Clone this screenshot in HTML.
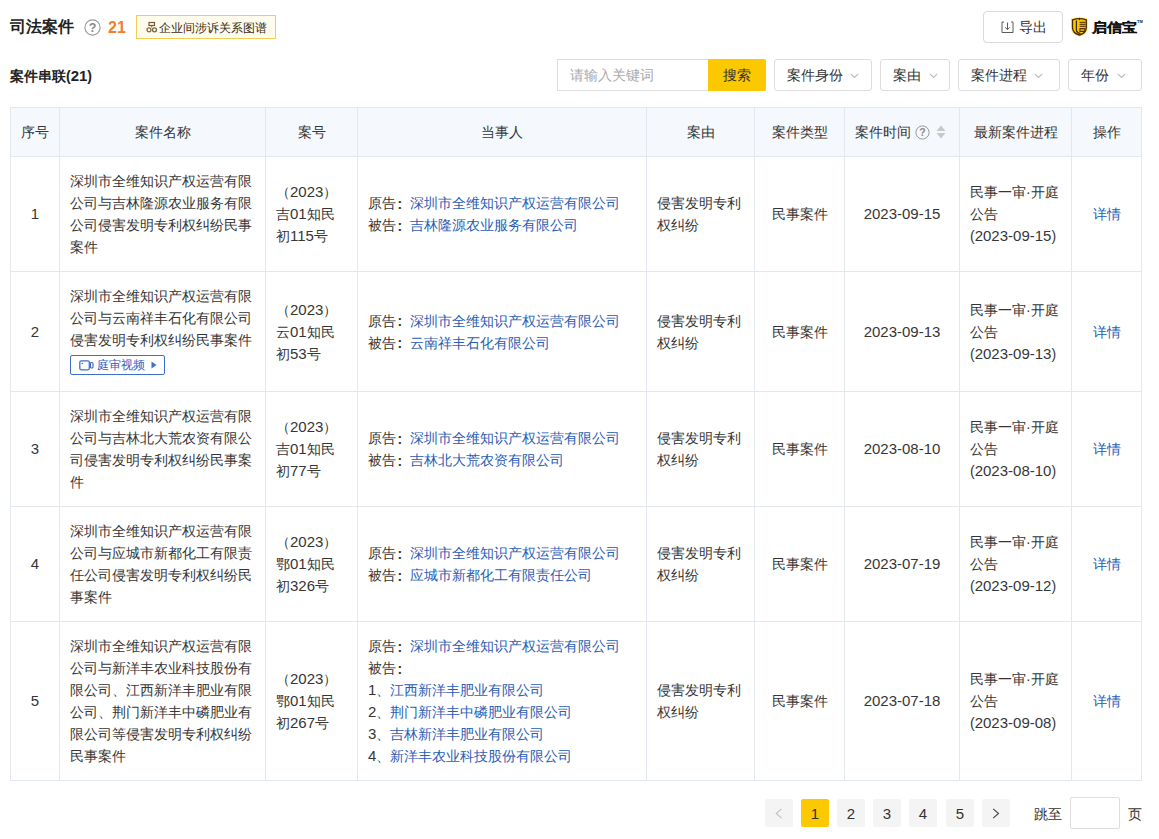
<!DOCTYPE html>
<html><head><meta charset="utf-8">
<style>
*{box-sizing:border-box;margin:0;padding:0}
html,body{width:1159px;height:839px;overflow:hidden;background:#fff}
body{font-family:"Liberation Sans",sans-serif;color:#333;font-size:14px;position:relative}
.abs{position:absolute}
.title{left:10px;top:17px;font-size:16px;font-weight:bold;color:#222;line-height:20px}
.qm{left:84px;top:19px;width:16px;height:16px;border:1px solid #999;border-radius:50%;color:#999;font-size:11px;line-height:14px;text-align:center;font-weight:bold}
.cnt{left:108px;top:18px;font-size:16px;font-weight:bold;color:#f27c2f;line-height:20px}
.badge{left:136px;top:15px;width:140px;height:24px;border:1px solid #efcf52;background:#fffcee;color:#3a2c10;font-size:12px;line-height:22px;padding-left:9px;white-space:nowrap}
.export{left:983px;top:11px;width:80px;height:32px;border:1px solid #d9d9d9;border-radius:4px;font-size:14px;line-height:30px;color:#333}
.sub{left:10px;top:66px;font-size:14px;font-weight:bold;color:#222;line-height:20px}
.inp{left:557px;top:59px;width:152px;height:32px;border:1px solid #ddd;border-right:none;color:#aaa;line-height:30px;padding-left:12px}
.sbtn{left:708px;top:59px;width:58px;height:32px;background:#fcc800;color:#333;line-height:32px;text-align:center;border-radius:0 2px 2px 0}
.dd{top:59px;height:32px;border:1px solid #ddd;border-radius:3px;line-height:30px;padding-left:12px;color:#333}
.dd svg{position:absolute;top:12px}
table{position:absolute;left:10px;top:107px;width:1131px;border-collapse:collapse;table-layout:fixed}
td,th{border:1px solid #e3e7ee;font-weight:normal;font-size:14px;line-height:22px;color:#363636;padding:0 10px;vertical-align:middle}
th{background:#f5f8fc;height:49px;text-align:center}
td.c{text-align:center}
a{color:#2a5db5;text-decoration:none}
.n{font-size:15px}
.col{display:inline-block;width:14px;text-indent:1.5px;font-weight:bold;font-size:14px;position:relative;top:0.5px}
.cnt .n{font-size:16px}
.pg{top:799px;width:28px;height:28px;background:#f4f4f4;text-align:center;line-height:29px;color:#333;font-size:14px;border-radius:2px}
.pg.on{background:#fcc800}
</style></head><body>
<div class="abs title">司法案件</div>
<svg class="abs" style="left:84px;top:19px" width="17" height="17" viewBox="0 0 17 17"><circle cx="8.5" cy="8.5" r="7.6" fill="none" stroke="#9a9a9a" stroke-width="1.1"/><text x="8.5" y="13" text-anchor="middle" font-family="Liberation Sans" font-weight="bold" font-size="12.5" fill="#8a8a8a">?</text></svg>
<div class="abs cnt"><span class="n">21</span></div>
<div class="abs badge"><svg class="abs" style="left:9px;top:5px" width="12" height="12" viewBox="0 0 12 12"><rect x="3" y="1.5" width="5.5" height="3" fill="none" stroke="#7a5a34" stroke-width="1.2"/><path d="M5.75 4.5V6.5" stroke="#7a5a34" stroke-width="1"/><circle cx="3" cy="8.8" r="2" fill="none" stroke="#8a6a3a" stroke-width="1.3"/><circle cx="8.5" cy="8.8" r="2" fill="none" stroke="#6a6a50" stroke-width="1.3"/></svg><span class="abs" style="left:22px;top:0.5px">企业间涉诉关系图谱</span></div>
<div class="abs export"><svg class="abs" style="left:17px;top:9px" width="13" height="13" viewBox="0 0 13 13"><path d="M3 1H1V11.5H12V1H10" fill="none" stroke="#5a5a5a" stroke-width="1"/><path d="M6.5 1.5V8.5M4.2 6.3L6.5 8.6L8.8 6.3" fill="none" stroke="#5a5a5a" stroke-width="1"/></svg><span class="abs" style="left:35px;top:0">导出</span></div>
<svg class="abs" style="left:1066px;top:12px" width="28" height="28" viewBox="0 0 28 28"><path d="M6.5 7.8Q13.5 5.6 20.3 7.8V15.5Q20.3 21.2 13.4 23Q6.5 21.2 6.5 15.5Z" fill="#f8c800" stroke="#ffe14a" stroke-width="3" opacity="0.8"/><path d="M6.5 7.8Q13.5 5.6 20.3 7.8V15.5Q20.3 21.2 13.4 23Q6.5 21.2 6.5 15.5Z" fill="#f8c800" stroke="#4a2800" stroke-width="1.3"/><path d="M10.4 8.6V18.3Q10.9 21 14.5 21.6" stroke="#4a2800" stroke-width="1.3" fill="none"/><path d="M13.6 10.3H19.5M13.6 12.3H19.5M13.6 14.3H19.5" stroke="#4a2800" stroke-width="1"/><rect x="13.9" y="16.6" width="4.8" height="2.9" fill="#d9a600" stroke="#4a2800" stroke-width="1"/><path d="M13.5 5.8V8.2" stroke="#4a2800" stroke-width="0.9"/></svg><div class="abs" style="left:1091.5px;top:16.5px;font-size:15px;font-weight:bold;color:#111;line-height:20px;letter-spacing:0.3px;-webkit-text-stroke:0.3px #111;transform:scale(1,0.86);transform-origin:0 17px">启信宝</div><svg class="abs" style="left:1137px;top:17.5px" width="7" height="5" viewBox="0 0 7 5"><text x="0" y="4.5" font-family="Liberation Sans" font-size="4" font-weight="bold" fill="#222">TM</text></svg>

<div class="abs sub">案件串联(<span class="n">21</span>)</div>
<div class="abs inp">请输入关键词</div>
<div class="abs sbtn">搜索</div>
<div class="abs dd" style="left:774px;width:98px;--cx:75px">案件身份<svg style="position:absolute;left:var(--cx);top:13px" width="9" height="6" viewBox="0 0 9 6"><path d="M0.8 0.8L4.5 4.5L8.2 0.8" fill="none" stroke="#bbb" stroke-width="1.1"/></svg></div>
<div class="abs dd" style="left:880px;width:70px;--cx:47.5px">案由<svg style="position:absolute;left:var(--cx);top:13px" width="9" height="6" viewBox="0 0 9 6"><path d="M0.8 0.8L4.5 4.5L8.2 0.8" fill="none" stroke="#bbb" stroke-width="1.1"/></svg></div>
<div class="abs dd" style="left:958px;width:102px;--cx:75px">案件进程<svg style="position:absolute;left:var(--cx);top:13px" width="9" height="6" viewBox="0 0 9 6"><path d="M0.8 0.8L4.5 4.5L8.2 0.8" fill="none" stroke="#bbb" stroke-width="1.1"/></svg></div>
<div class="abs dd" style="left:1068px;width:74px;--cx:47.5px">年份<svg style="position:absolute;left:var(--cx);top:13px" width="9" height="6" viewBox="0 0 9 6"><path d="M0.8 0.8L4.5 4.5L8.2 0.8" fill="none" stroke="#bbb" stroke-width="1.1"/></svg></div>

<table>
<colgroup><col style="width:49px"><col style="width:206px"><col style="width:92px"><col style="width:289px"><col style="width:108px"><col style="width:90px"><col style="width:115px"><col style="width:112px"><col style="width:70px"></colgroup>
<tr><th>序号</th><th>案件名称</th><th>案号</th><th>当事人</th><th>案由</th><th>案件类型</th><th style="padding:0;text-align:left;position:relative"><span style="position:absolute;left:10px;top:13px">案件时间</span><svg style="position:absolute;left:70px;top:17px" width="15" height="15" viewBox="0 0 15 15"><circle cx="7.5" cy="7.5" r="6.6" fill="none" stroke="#999" stroke-width="1"/><text x="7.5" y="11" text-anchor="middle" font-family="Liberation Sans" font-weight="bold" font-size="10.5" fill="#8a8a8a">?</text></svg><svg style="position:absolute;left:91px;top:17px" width="10" height="15" viewBox="0 0 10 15"><path d="M5 0.5L9.5 6H0.5Z M0.5 8H9.5L5 13.5Z" fill="#c8c8c8"/></svg></th><th>最新案件进程</th><th>操作</th></tr>
<tr style="height:115px"><td class="c"><span class="n">1</span></td><td>深圳市全维知识产权运营有限公司与吉林隆源农业服务有限公司侵害发明专利权纠纷民事案件</td><td>（<span class="n">2023</span>）吉<span class="n">01</span>知民初<span class="n">115</span>号</td><td>原告<span class="col">:</span><a>深圳市全维知识产权运营有限公司</a><br>被告<span class="col">:</span><a>吉林隆源农业服务有限公司</a></td><td>侵害发明专利权纠纷</td><td class="c">民事案件</td><td class="c"><span class="n">2023-09-15</span></td><td>民事一审·开庭<br>公告<br>(<span class="n">2023-09-15</span>)</td><td class="c"><a>详情</a></td></tr>
<tr style="height:120px"><td class="c"><span class="n">2</span></td><td>深圳市全维知识产权运营有限公司与云南祥丰石化有限公司侵害发明专利权纠纷民事案件<div style="margin-top:4px;margin-bottom:3px;width:95px;height:20px;border:1px solid #3f6fcc;border-radius:2px;position:relative;color:#2f62c3;font-size:12px;line-height:18px"><svg style="position:absolute;left:8px;top:4px" width="15" height="11" viewBox="0 0 15 11"><rect x="0.8" y="0.8" width="9.5" height="9" rx="1.5" fill="none" stroke="#3f6fcc" stroke-width="1.3"/><rect x="11.5" y="2.5" width="2.5" height="5.5" rx="1" fill="none" stroke="#3f6fcc" stroke-width="1.2"/><circle cx="3.3" cy="3.5" r="0.8" fill="#3f6fcc"/></svg><span style="position:absolute;left:26px;top:0">庭审视频</span><svg style="position:absolute;left:80px;top:5px" width="6" height="8" viewBox="0 0 6 8"><path d="M0.5 0.5L5.5 4L0.5 7.5Z" fill="#3f6fcc"/></svg></div></td><td>（<span class="n">2023</span>）云<span class="n">01</span>知民初<span class="n">53</span>号</td><td>原告<span class="col">:</span><a>深圳市全维知识产权运营有限公司</a><br>被告<span class="col">:</span><a>云南祥丰石化有限公司</a></td><td>侵害发明专利权纠纷</td><td class="c">民事案件</td><td class="c"><span class="n">2023-09-13</span></td><td>民事一审·开庭<br>公告<br>(<span class="n">2023-09-13</span>)</td><td class="c"><a>详情</a></td></tr>
<tr style="height:115px"><td class="c"><span class="n">3</span></td><td>深圳市全维知识产权运营有限公司与吉林北大荒农资有限公司侵害发明专利权纠纷民事案件</td><td>（<span class="n">2023</span>）吉<span class="n">01</span>知民初<span class="n">77</span>号</td><td>原告<span class="col">:</span><a>深圳市全维知识产权运营有限公司</a><br>被告<span class="col">:</span><a>吉林北大荒农资有限公司</a></td><td>侵害发明专利权纠纷</td><td class="c">民事案件</td><td class="c"><span class="n">2023-08-10</span></td><td>民事一审·开庭<br>公告<br>(<span class="n">2023-08-10</span>)</td><td class="c"><a>详情</a></td></tr>
<tr style="height:115px"><td class="c"><span class="n">4</span></td><td>深圳市全维知识产权运营有限公司与应城市新都化工有限责任公司侵害发明专利权纠纷民事案件</td><td>（<span class="n">2023</span>）鄂<span class="n">01</span>知民初<span class="n">326</span>号</td><td>原告<span class="col">:</span><a>深圳市全维知识产权运营有限公司</a><br>被告<span class="col">:</span><a>应城市新都化工有限责任公司</a></td><td>侵害发明专利权纠纷</td><td class="c">民事案件</td><td class="c"><span class="n">2023-07-19</span></td><td>民事一审·开庭<br>公告<br>(<span class="n">2023-09-12</span>)</td><td class="c"><a>详情</a></td></tr>
<tr style="height:159px"><td class="c"><span class="n">5</span></td><td>深圳市全维知识产权运营有限公司与新洋丰农业科技股份有限公司、江西新洋丰肥业有限公司、荆门新洋丰中磷肥业有限公司等侵害发明专利权纠纷民事案件</td><td>（<span class="n">2023</span>）鄂<span class="n">01</span>知民初<span class="n">267</span>号</td><td>原告<span class="col">:</span><a>深圳市全维知识产权运营有限公司</a><br>被告<span class="col">:</span><br><span class="n">1</span>、<a>江西新洋丰肥业有限公司</a><br><span class="n">2</span>、<a>荆门新洋丰中磷肥业有限公司</a><br><span class="n">3</span>、<a>吉林新洋丰肥业有限公司</a><br><span class="n">4</span>、<a>新洋丰农业科技股份有限公司</a></td><td>侵害发明专利权纠纷</td><td class="c">民事案件</td><td class="c"><span class="n">2023-07-18</span></td><td>民事一审·开庭<br>公告<br>(<span class="n">2023-09-08</span>)</td><td class="c"><a>详情</a></td></tr>
</table>

<div class="abs pg" style="left:765px"><svg style="position:absolute;left:10px;top:9px" width="8" height="12" viewBox="0 0 8 12"><path d="M6.5 0.8L1.2 5.5L6.5 10.2" fill="none" stroke="#c0c0c0" stroke-width="1.1"/></svg></div>
<div class="abs pg on" style="left:801px"><span class="n">1</span></div>
<div class="abs pg" style="left:837px"><span class="n">2</span></div>
<div class="abs pg" style="left:873px"><span class="n">3</span></div>
<div class="abs pg" style="left:909px"><span class="n">4</span></div>
<div class="abs pg" style="left:946px"><span class="n">5</span></div>
<div class="abs pg" style="left:982px"><svg style="position:absolute;left:10px;top:9px" width="8" height="12" viewBox="0 0 8 12"><path d="M1.2 0.8L6.5 5.5L1.2 10.2" fill="none" stroke="#444" stroke-width="1.1"/></svg></div>
<div class="abs" style="left:1034px;top:803.5px;line-height:20px">跳至</div>
<div class="abs" style="left:1070px;top:797px;width:50px;height:32px;border:1px solid #ddd;border-radius:2px"></div>
<div class="abs" style="left:1128px;top:803.5px;line-height:20px">页</div>
</body></html>
